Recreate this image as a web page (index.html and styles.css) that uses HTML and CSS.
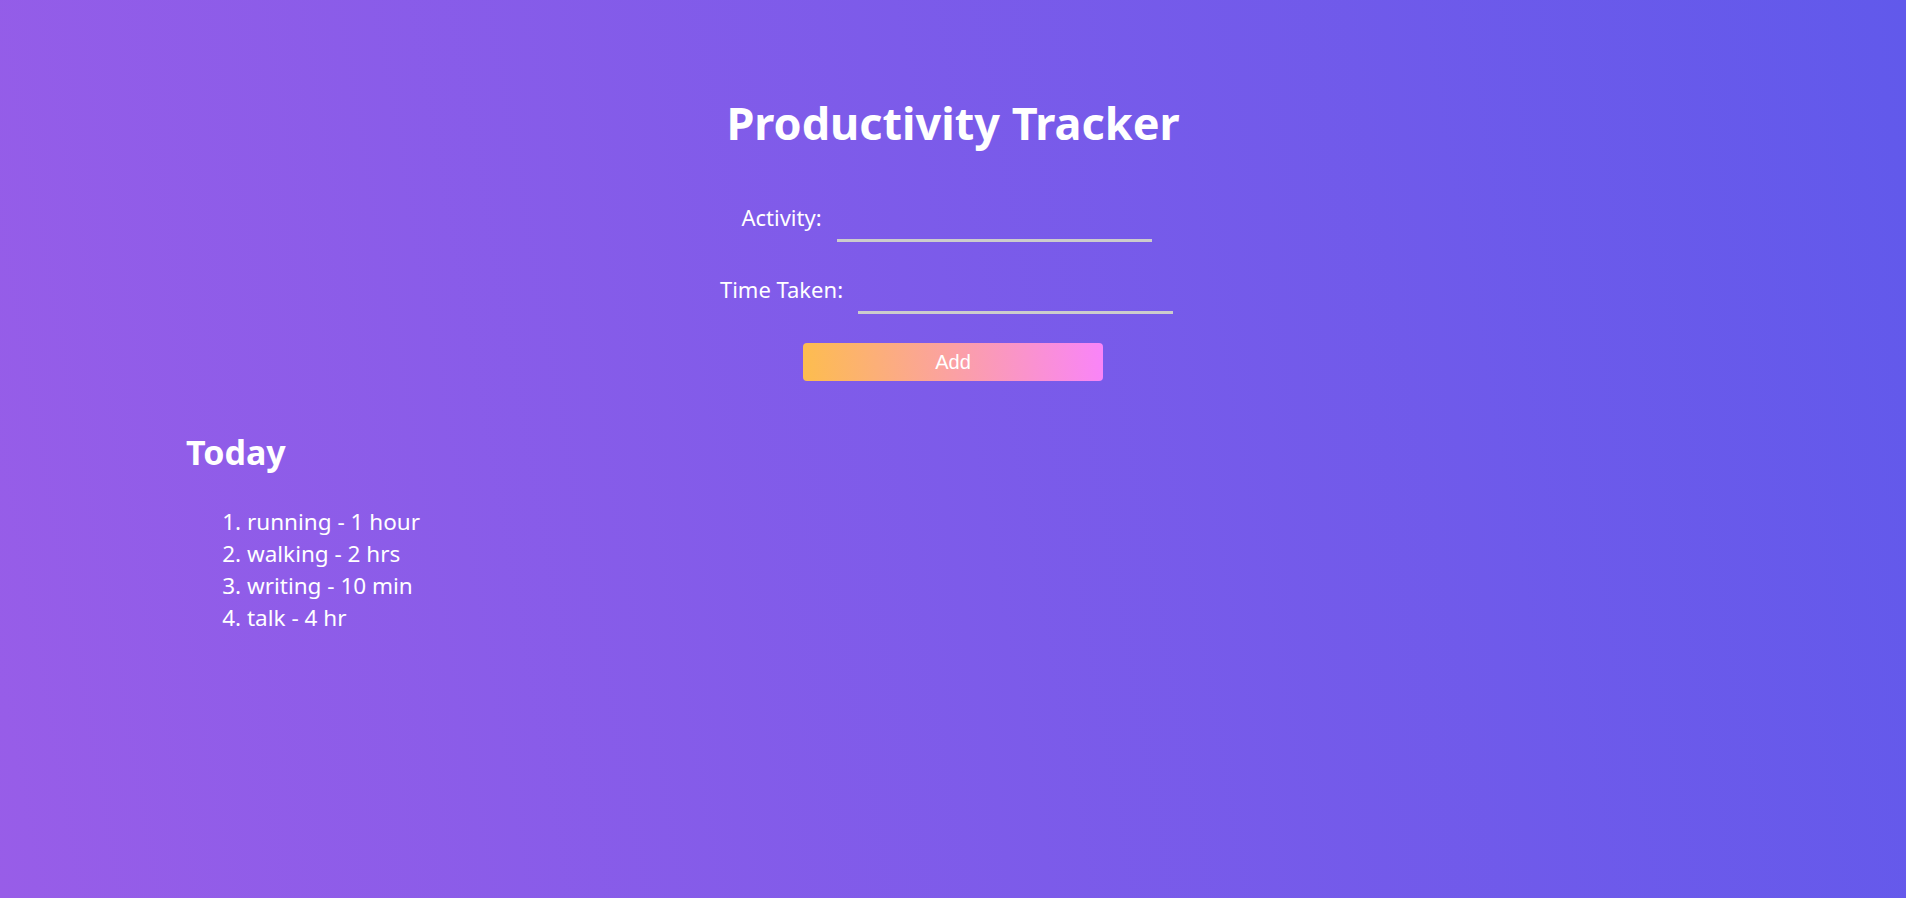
FILE: index.html
```html
<!DOCTYPE html>
<html lang="en">
<head>
<meta charset="utf-8">
<title>Productivity Tracker</title>
<link rel="stylesheet" href="styles.css">
</head>
<body>
<main class="page">
  <h1 class="title">Productivity Tracker</h1>
  <form class="entry-form">
    <div class="field">
      <label class="field-label" for="activity">Activity:</label>
      <input class="field-input" id="activity" type="text">
    </div>
    <div class="field field-second">
      <label class="field-label" for="time">Time Taken:</label>
      <input class="field-input" id="time" type="text">
    </div>
    <button class="add-btn" type="button">Add</button>
  </form>
  <section class="today">
    <h2 class="today-title">Today</h2>
    <ol class="today-list">
      <li>running - 1 hour</li>
      <li>walking - 2 hrs</li>
      <li>writing - 10 min</li>
      <li>talk - 4 hr</li>
    </ol>
  </section>
</main>
</body>
</html>
```
FILE: styles.css
```css
html, body {
  margin: 0;
  padding: 0;
}
body {
  min-height: 100vh;
  background: linear-gradient(80deg, #985de8 0%, #6159eb 100%);
  color: #ffffff;
  font-family: "Noto Sans", "Open Sans", sans-serif;
}
.page {
  display: flex;
  flex-direction: column;
  min-height: 100vh;
}
.title {
  margin: 98px 0 0;
  font-size: 45px;
  line-height: 50px;
  font-weight: 700;
  text-align: center;
}
.entry-form {
  display: flex;
  flex-direction: column;
  align-items: center;
  margin-top: 54px;
}
.field {
  display: flex;
  align-items: flex-end;
  gap: 15px;
  padding-right: 13px;
}
.field-second {
  margin-top: 32px;
}
.field-label {
  font-size: 22px;
  line-height: 30px;
  padding-bottom: 10px;
}
.field-input {
  box-sizing: border-box;
  width: 315px;
  height: 40px;
  margin: 0;
  padding: 0 4px;
  border: none;
  border-bottom: 3px solid #cccccc;
  background: transparent;
  color: #ffffff;
  font-family: inherit;
  font-size: 20px;
  outline: none;
}
.add-btn {
  margin-top: 29px;
  width: 300px;
  height: 38px;
  border: none;
  border-radius: 4px;
  background: linear-gradient(85deg, #fdbd4e 0%, #f984f9 100%);
  color: #ffffff;
  font-family: "Liberation Sans", Arial, sans-serif;
  font-size: 20px;
  cursor: pointer;
}
.today {
  padding: 0 186px;
  margin-top: 51px;
}
.today-title {
  margin: 0;
  font-size: 34px;
  line-height: 40px;
  font-weight: 700;
}
.today-list {
  margin: 34px 0 0;
  padding-left: 61px;
  font-size: 22.5px;
  line-height: 32px;
}
```
